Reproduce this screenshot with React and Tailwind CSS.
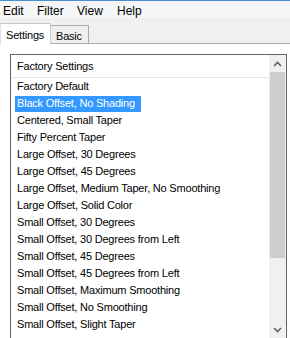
import React from "react";

const presets = [
  "Factory Default",
  "Black Offset, No Shading",
  "Centered, Small Taper",
  "Fifty Percent Taper",
  "Large Offset, 30 Degrees",
  "Large Offset, 45 Degrees",
  "Large Offset, Medium Taper, No Smoothing",
  "Large Offset, Solid Color",
  "Small Offset, 30 Degrees",
  "Small Offset, 30 Degrees from Left",
  "Small Offset, 45 Degrees",
  "Small Offset, 45 Degrees from Left",
  "Small Offset, Maximum Smoothing",
  "Small Offset, No Smoothing",
  "Small Offset, Slight Taper",
];

const selected = 1;

function Chevron({ up }) {
  return (
    <svg width="9" height="6" viewBox="0 0 9 6">
      <path
        d={up ? "M1 5 L4.5 1.5 L8 5" : "M1 1 L4.5 4.5 L8 1"}
        fill="none"
        stroke="#606060"
        strokeWidth="1.6"
      />
    </svg>
  );
}

export default function App() {
  return (
    <div className="w-[290px] h-[338px] overflow-hidden bg-white font-['Liberation_Sans',Arial,sans-serif] text-black">
      <div className="h-px bg-[#4a8fd4]" />

      {/* menu bar */}
      <div className="h-[17px] bg-[#f5f6f7] flex items-center text-[12px] pl-[3px] pt-[2px]">
        <span className="w-[34px]">Edit</span>
        <span className="w-[40px]">Filter</span>
        <span className="w-[40px]">View</span>
        <span>Help</span>
      </div>

      {/* tab strip */}
      <div className="h-[26px] bg-[#f0f0f0] flex items-end border-b border-[#adadad] pt-[4px] text-[11px] tracking-[-0.2px]">
        <div className="relative -mb-px h-[21px] w-[51px] bg-white border border-b-0 border-[#c8c8c8] border-l-[#e0e0e0] pl-[5px] pt-[3px] z-10">
          Settings
        </div>
        <div className="h-[18px] w-[38px] border border-b-0 border-l-0 border-[#acacac] bg-[#f0f0f0] pl-[5px] pt-[2px]">
          Basic
        </div>
      </div>

      {/* content */}
      <div className="pt-[10px] pl-[10px]">
        <div className="w-[277px] h-[290px] border border-[#646464] flex">
          <div className="flex-1 flex flex-col text-[11px] tracking-[-0.2px]">
            <div className="h-[23px] border-b border-[#e5e5e5] pl-[6px] flex items-center pt-[1px]">
              Factory Settings
            </div>
            <div className="flex flex-col pl-[4px]">
              {presets.map((p, i) => (
                <div key={p} className="h-[17px] flex items-center whitespace-nowrap">
                  <span
                    className={
                      i === selected
                        ? "bg-[#3399ff] text-white pl-[2px] pr-[6px] h-[16px] flex items-center"
                        : "pl-[2px] pr-[6px]"
                    }
                  >
                    {p}
                  </span>
                </div>
              ))}
            </div>
          </div>

          {/* scrollbar */}
          <div className="w-[17px] bg-[#f0f0f0] flex flex-col">
            <div className="h-[17px] flex items-center justify-center">
              <Chevron up />
            </div>
            <div className="h-[186px] bg-[#cdcdcd] mx-px" />
            <div className="flex-1" />
            <div className="h-[17px] flex items-center justify-center mb-[5px]">
              <Chevron />
            </div>
          </div>
        </div>
      </div>
    </div>
  );
}
